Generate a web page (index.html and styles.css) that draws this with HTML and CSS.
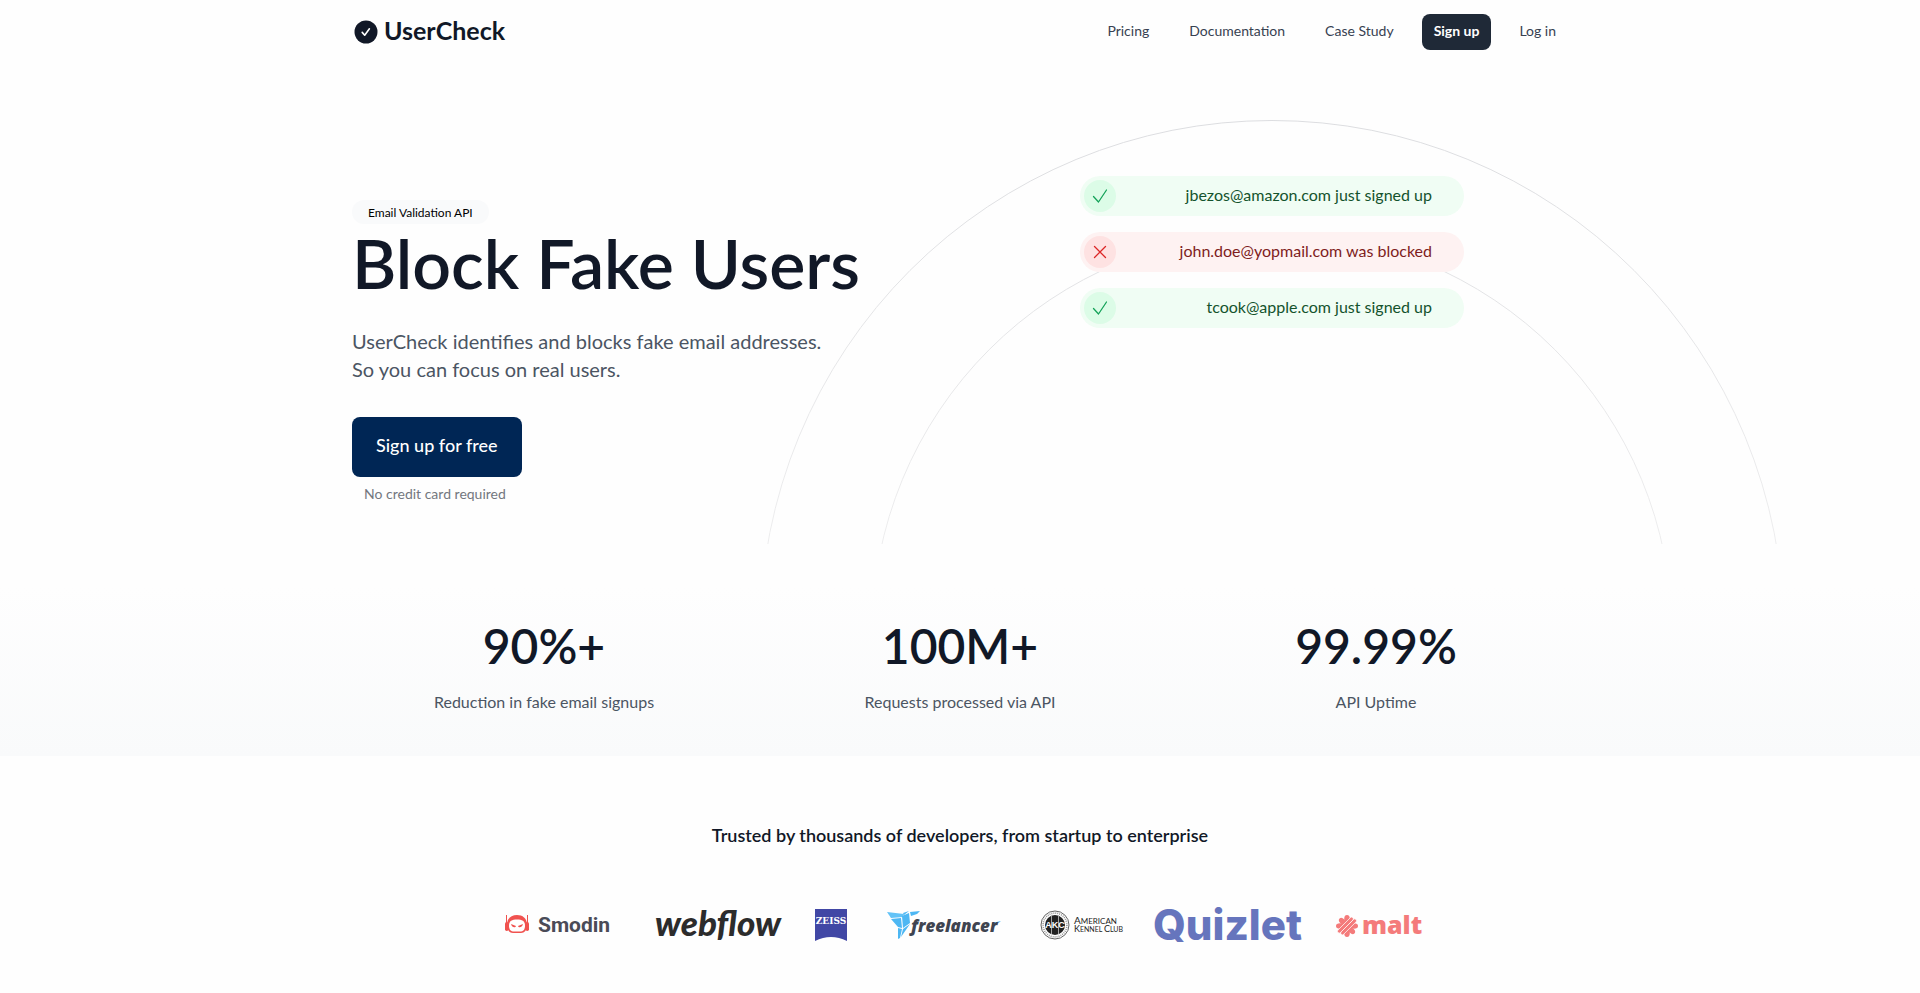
FILE: index.html
```html
<!DOCTYPE html>
<html lang="en">
<head>
<meta charset="utf-8">
<meta name="viewport" content="width=device-width, initial-scale=1">
<title>UserCheck</title>
<link rel="stylesheet" href="styles.css">
</head>
<body>
<header class="header container">
  <a class="brand" href="#">
    <svg class="brand-mark" viewBox="0 0 24 24" aria-hidden="true"><circle cx="12" cy="12" r="11.5" fill="#111827"/><path d="M8.2 12.4l2.5 2.8 4.7-6.4" fill="none" stroke="#fff" stroke-width="1.6" stroke-linecap="round" stroke-linejoin="round"/></svg>
    <span>UserCheck</span>
  </a>
  <nav class="nav">
    <a href="#">Pricing</a>
    <a href="#">Documentation</a>
    <a href="#">Case Study</a>
    <a class="nav-cta" href="#">Sign up</a>
    <a href="#">Log in</a>
  </nav>
</header>
<main>
  <section class="hero">
    <div class="container hero-grid">
      <div class="hero-copy">
        <span class="badge">Email Validation API</span>
        <h1>Block Fake Users</h1>
        <p class="lead">UserCheck identifies and blocks fake email addresses.<br>So you can focus on real users.</p>
        <div class="cta">
          <a class="cta-button" href="#">Sign up for free</a>
          <span class="cta-note">No credit card required</span>
        </div>
      </div>
      <div class="hero-visual">
        <svg class="rings" viewBox="0 0 1026 424" fill="none" aria-hidden="true">
          <defs><linearGradient id="fade" gradientUnits="userSpaceOnUse" x1="0" y1="0" x2="0" y2="424"><stop offset="0" stop-color="#dcdde0"/><stop offset="1" stop-color="#ededee"/></linearGradient></defs>
          <circle cx="513" cy="512.5" r="512" stroke="url(#fade)"/>
          <circle cx="513" cy="512.5" r="400" stroke="url(#fade)"/>
        </svg>
        <ul class="events">
          <li class="event ok"><svg viewBox="0 0 32 32" aria-hidden="true"><path d="M9.5 16.5l5 5.5 8-12"/></svg><span>jbezos@amazon.com just signed up</span></li>
          <li class="event bad"><svg viewBox="0 0 32 32" aria-hidden="true"><path d="M10.5 10.5l11 11m0-11l-11 11"/></svg><span>john.doe@yopmail.com was blocked</span></li>
          <li class="event ok"><svg viewBox="0 0 32 32" aria-hidden="true"><path d="M9.5 16.5l5 5.5 8-12"/></svg><span>tcook@apple.com just signed up</span></li>
        </ul>
      </div>
    </div>
  </section>
  <section class="stats">
    <dl class="container stats-grid">
      <div class="stat"><dt>Reduction in fake email signups</dt><dd>90%+</dd></div>
      <div class="stat"><dt>Requests processed via API</dt><dd>100M+</dd></div>
      <div class="stat"><dt>API Uptime</dt><dd>99.99%</dd></div>
    </dl>
  </section>
  <section class="trusted container">
    <h2>Trusted by thousands of developers, from startup to enterprise</h2>
    <div class="logos">
      <svg class="smodin" viewBox="0 0 118 40" role="img" aria-label="Smodin">
        <path d="M1.500 10v12M22.500 10v12" stroke="#f0524f" stroke-width="1"/>
        <rect x="0" y="17" width="3.500" height="9" rx="1.700" fill="#f0524f"/><rect x="20.500" y="17" width="3.500" height="9" rx="1.700" fill="#f0524f"/>
        <path d="M2 20c0-7 4.500-10 10-10s10 3 10 10c0 5-2.500 8-6 8H8c-3.500 0-6-3-6-8z" fill="#f0524f"/>
        <path d="M4 20.500c0-4.500 3-6 8-6s8 1.500 8 6-2 6-5 6H9c-3 0-5-1.500-5-6z" fill="#fff"/>
        <path d="M6 19l5 2c-.5 2-4 2-5-2zM18 19l-5 2c.5 2 4 2 5-2z" fill="#f0524f"/>
        <text x="33" y="27">Smodin</text>
      </svg>
      <svg class="webflow" viewBox="0 0 128 40" role="img" aria-label="webflow"><text x="0" y="31">webflow</text></svg>
      <svg class="zeiss" viewBox="0 0 40 40" role="img" aria-label="Zeiss"><path d="M0 4h32v32Q16 28 0 36z" fill="#4147a5"/><text x="16" y="19" text-anchor="middle">ZEISS</text></svg>
      <svg class="freelancer" viewBox="0 0 122 40" role="img" aria-label="freelancer">
        <path d="M0 7l17 2-1 3-12 1z" fill="#63c3f7"/>
        <path d="M4 14l10-1 1 10-4-1zM15 11l7-3 1 10-7 5zM16 8l6-2-5 4zM23 7l10-1-3 3-6 2zM11 23l4 1-2 9-2 1zM16 24l7-5-9 13z" fill="#4db7f3"/>
        <path d="M105 18l9-2-4 3-5 2z" fill="#4db7f3"/>
        <text x="24" y="27">freelancer</text>
      </svg>
      <svg class="akc" viewBox="0 0 80 40" role="img" aria-label="American Kennel Club">
        <circle cx="14" cy="20" r="14" fill="#fff" stroke="#666" stroke-width="1"/>
        <circle cx="14" cy="20" r="11.900" fill="none" stroke="#999" stroke-width="1.600" stroke-dasharray="1 1"/>
        <circle cx="14" cy="20" r="10" fill="#222"/>
        <path d="M10.500 11v18M17.500 11v18" stroke="#fff" stroke-width=".6"/>
        <text class="akc-mark" x="14" y="23" text-anchor="middle">AKC</text>
        <text class="akc-name row-one" x="33" y="19"><tspan class="big">A</tspan>MERICAN</text>
        <text class="akc-name" x="33" y="27"><tspan class="big">K</tspan>ENNEL <tspan class="big">C</tspan>LUB</text>
      </svg>
      <svg class="quizlet" viewBox="0 0 150 40" role="img" aria-label="Quizlet"><text x="0" y="35">Quizlet</text></svg>
      <svg class="malt" viewBox="0 0 88 40" role="img" aria-label="malt">
        <g transform="translate(12 21)">
          <g fill="#f47b7b">
            <ellipse cx="7" rx="4" ry="2.800"/><ellipse cx="-7" rx="4" ry="2.800"/>
            <ellipse cy="7" rx="2.800" ry="4"/><ellipse cy="-7" rx="2.800" ry="4"/>
            <ellipse cx="6.500" rx="4" ry="2.700" transform="rotate(45)"/><ellipse cx="-6.500" rx="4" ry="2.700" transform="rotate(45)"/>
          </g>
          <g transform="rotate(-45)" fill="#f47b7b" stroke="#fff" stroke-width=".7">
            <rect x="-11" y="-3.500" width="21" height="3.500" rx="1.700"/>
            <rect x="-10" y="0" width="21" height="3.500" rx="1.700"/>
          </g>
        </g>
        <text x="27" y="29">malt</text>
      </svg>
    </div>
  </section>
</main>
</body>
</html>
```
FILE: styles.css
```css
* { box-sizing: border-box; }
body { margin: 0; background: #fefefe; color: #111827; font-family: Lato, "Liberation Sans", sans-serif; font-size: 16px; line-height: 24px; overflow-x: hidden; }
a { color: inherit; text-decoration: none; }
h1, h2, p, ul, dl, dd { margin: 0; padding: 0; }
.container { width: 100%; max-width: 1280px; margin: 0 auto; padding: 0 32px; }

.header { display: flex; align-items: center; justify-content: space-between; height: 64px; }
.brand { display: flex; align-items: center; gap: 6px; padding-left: 2px; font-size: 25px; line-height: 32px; font-weight: 700; }
.brand span { padding-bottom: 4px; }
.brand-mark { width: 24px; height: 24px; }
.nav { display: flex; gap: 16px; font-size: 14px; line-height: 20px; color: #374151; }
.nav a { padding: 7px 12px 9px; }
.nav .nav-cta { background: #1f2937; color: #fff; border-radius: 8px; font-weight: 700; }

.hero { overflow: hidden; }
.hero-grid { display: grid; grid-template-columns: 1fr 1fr; gap: 32px; min-height: 480px; }
.hero-copy { padding-top: 136px; }
.badge { display: table; padding: 5px 16px 3px; border-radius: 12px; background: #f9fafb; color: #000; font-size: 12px; line-height: 16px; }
h1 { margin-top: 3px; font-size: 68px; line-height: 72px; font-weight: 600; white-space: nowrap; }
.lead { margin-top: 28px; color: #4b5563; font-size: 20px; line-height: 28px; }
.cta { display: inline-flex; flex-direction: column; gap: 8px; margin-top: 34px; }
.cta-button { padding: 14px 24px 18px; border-radius: 8px; background: #002655; color: #fff; font-size: 18px; line-height: 28px; font-weight: 500; }
.cta-note { padding-left: 12px; color: #73777f; font-size: 14px; line-height: 18px; }
.hero-visual { position: relative; padding-top: 112px; }
.rings { position: absolute; top: 56px; left: 50%; width: 1026px; height: 424px; transform: translateX(-50%); }
.events { position: relative; display: flex; flex-direction: column; gap: 16px; max-width: 384px; margin: 0 auto; list-style: none; }
.event { display: flex; align-items: center; justify-content: space-between; padding: 4px 32px 4px 4px; border-radius: 20px; }
.event span { padding-bottom: 2px; }
.event svg { width: 32px; height: 32px; border-radius: 50%; fill: none; stroke-width: 1.3; stroke-linecap: round; stroke-linejoin: round; }
.ok { background: #f0fdf4; color: #14532d; }
.ok svg { background: #dcfce7; stroke: #16a35a; }
.bad { background: #fef2f2; color: #7f1d1d; }
.bad svg { background: #fee2e2; stroke: #dc2626; }

.stats { padding: 68px 0 42px; background: linear-gradient(#fefefe 20%, #f9fafb); }
.stats-grid { display: grid; grid-template-columns: repeat(3, 1fr); gap: 32px; text-align: center; }
.stat { display: flex; flex-direction: column-reverse; gap: 10px; }
.stat dt { color: #4b5563; }
.stat dd { font-size: 48px; line-height: 68px; font-weight: 600; }

.trusted { padding-top: 63px; }
.trusted h2 { text-align: center; font-size: 18px; line-height: 32px; font-weight: 600; }
.logos { display: flex; align-items: center; justify-content: center; gap: 32px; padding-left: 8px; margin: 54px auto 48px; }
.logos svg { height: 40px; overflow: visible; }
.smodin { width: 118px; }
.smodin text { font: 700 21px Roboto, sans-serif; fill: #4a4b57; }
.webflow { width: 128px; }
.webflow text { font: italic 900 35px Lato, sans-serif; fill: #2c2c2c; }
.zeiss { width: 40px; }
.zeiss text { font: 700 9px "DejaVu Serif", serif; fill: #fff; }
.freelancer { width: 122px; }
.freelancer text { font: italic 800 17px "Open Sans", sans-serif; fill: #3f4450; }
.akc { width: 80px; }
.akc-mark { font: 700 9px "Liberation Sans", sans-serif; fill: #fff; }
.akc-name { font: 7px Lato, sans-serif; fill: #222; }
.akc-name .big { font-size: 9px; }
.row-one { font-size: 8px; }
.row-one .big { font-size: 10px; }
.quizlet { width: 150px; }
.quizlet text { font: 800 42px Inter, sans-serif; fill: #6675bd; }
.malt { width: 88px; }
.malt text { font: 900 25px "Noto Sans", sans-serif; fill: #f47b7b; }
```
